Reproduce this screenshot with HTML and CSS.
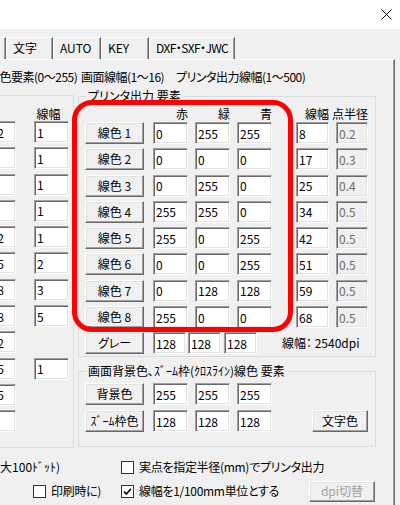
FILE: index.html
```html
<!DOCTYPE html>
<html lang="ja">
<head>
    <meta charset="UTF-8">
    <meta name="viewport" content="width=device-width, initial-scale=1.0">
    <title>色・画面・線幅</title>
    <link rel="stylesheet" href="styles.css">
</head>
<body>
    <div class="titlebar">
        <svg class="close" width="11" height="11" viewBox="0 0 11 11"><path d="M0.5 0.5L10.5 10.5M10.5 0.5L0.5 10.5" stroke="#000" stroke-width="1"/></svg>
    </div>
    <div class="tabs">
        <div class="tab tab-prev"></div>
        <div class="tab tab-moji">文字</div>
        <div class="tab tab-auto">AUTO</div>
        <div class="tab tab-key">KEY</div>
        <div class="tab tab-dxf">DXF・SXF・JWC</div>
    </div>
    <div class="panel">
        <div class="ranges">
            <span class="rng1">線色要素(0～255)</span>
            <span class="rng2">画面線幅(1～16)</span>
            <span>プリンタ出力線幅(1～500)</span>
        </div>

        <div class="content">
            <!-- 画面 要素 (左端で切れている) -->
            <div class="lgroup">
                <div class="lhead"><span class="lc-b">青</span><span class="lc-w">線幅</span></div>
                <div class="lrows">
                    <div class="lrow"><input class="ed lc-b" value="192"><input class="ed lc-w" value="1"></div>
                    <div class="lrow"><input class="ed lc-b" value="0"><input class="ed lc-w" value="1"></div>
                    <div class="lrow"><input class="ed lc-b" value="0"><input class="ed lc-w" value="1"></div>
                    <div class="lrow"><input class="ed lc-b" value="0"><input class="ed lc-w" value="1"></div>
                    <div class="lrow"><input class="ed lc-b" value="192"><input class="ed lc-w" value="1"></div>
                    <div class="lrow"><input class="ed lc-b" value="255"><input class="ed lc-w" value="2"></div>
                    <div class="lrow"><input class="ed lc-b" value="128"><input class="ed lc-w" value="3"></div>
                    <div class="lrow"><input class="ed lc-b" value="128"><input class="ed lc-w" value="5"></div>
                    <div class="lrow"><input class="ed lc-b" value="192"></div>
                    <div class="lrow"><input class="ed lc-b" value="255"><input class="ed lc-w" value="1"></div>
                    <div class="lrow"><input class="ed lc-b" value="255"></div>
                    <div class="lrow"><input class="ed lc-b" value="0"></div>
                </div>
            </div>

            <div class="col">
                <fieldset class="grp grp-print">
                    <legend>プリンタ出力 要素</legend>
                    <div class="head">
                        <span class="hc c-btn"></span>
                        <span class="hc c-r">赤</span>
                        <span class="hc c-g">緑</span>
                        <span class="hc c-b">青</span>
                        <span class="hc c-w">線幅</span>
                        <span class="hc c-d">点半径</span>
                    </div>
                    <div class="rows">
                        <div class="row"><button class="btn c-btn">線色 1</button><input class="ed c-r" value="0"><input class="ed c-g" value="255"><input class="ed c-b" value="255"><input class="ed c-w" value="8"><input class="ed c-d" value="0.2" disabled></div>
                        <div class="row"><button class="btn c-btn">線色 2</button><input class="ed c-r" value="0"><input class="ed c-g" value="0"><input class="ed c-b" value="0"><input class="ed c-w" value="17"><input class="ed c-d" value="0.3" disabled></div>
                        <div class="row"><button class="btn c-btn">線色 3</button><input class="ed c-r" value="0"><input class="ed c-g" value="255"><input class="ed c-b" value="0"><input class="ed c-w" value="25"><input class="ed c-d" value="0.4" disabled></div>
                        <div class="row"><button class="btn c-btn">線色 4</button><input class="ed c-r" value="255"><input class="ed c-g" value="255"><input class="ed c-b" value="0"><input class="ed c-w" value="34"><input class="ed c-d" value="0.5" disabled></div>
                        <div class="row"><button class="btn c-btn">線色 5</button><input class="ed c-r" value="255"><input class="ed c-g" value="0"><input class="ed c-b" value="255"><input class="ed c-w" value="42"><input class="ed c-d" value="0.5" disabled></div>
                        <div class="row"><button class="btn c-btn">線色 6</button><input class="ed c-r" value="0"><input class="ed c-g" value="0"><input class="ed c-b" value="255"><input class="ed c-w" value="51"><input class="ed c-d" value="0.5" disabled></div>
                        <div class="row"><button class="btn c-btn">線色 7</button><input class="ed c-r" value="0"><input class="ed c-g" value="128"><input class="ed c-b" value="128"><input class="ed c-w" value="59"><input class="ed c-d" value="0.5" disabled></div>
                        <div class="row"><button class="btn c-btn">線色 8</button><input class="ed c-r" value="255"><input class="ed c-g" value="0"><input class="ed c-b" value="0"><input class="ed c-w" value="68"><input class="ed c-d" value="0.5" disabled></div>
                        <div class="row"><button class="btn c-btn">グレー</button><input class="ed c-gr1" value="128"><input class="ed c-gr2" value="128"><input class="ed c-gr3" value="128"><span class="dpi">線幅：&nbsp;2540dpi</span></div>
                    </div>
                </fieldset>

                <fieldset class="grp grp-screen">
                    <legend>画面背景色､ｽﾞｰﾑ枠(ｸﾛｽﾗｲﾝ)線色 要素</legend>
                    <div class="row"><button class="btn c-btn">背景色</button><input class="ed c-r" value="255"><input class="ed c-g" value="255"><input class="ed c-b" value="255"></div>
                    <div class="row"><button class="btn c-btn">ｽﾞｰﾑ枠色</button><input class="ed c-r" value="128"><input class="ed c-g" value="128"><input class="ed c-b" value="128"><button class="btn btn-char">文字色</button></div>
                </fieldset>
            </div>
        </div>

        <div class="opt-row opt-1">
            <span class="note">(最大100ﾄﾞｯﾄ)</span>
            <label class="chk"><span class="box"></span>実点を指定半径(mm)でプリンタ出力</label>
        </div>
        <div class="opt-row opt-2">
            <label class="chk chk-print"><span class="box"></span>印刷時に)</label>
            <label class="chk"><span class="box"><svg width="11" height="11" viewBox="0 0 11 11"><path d="M2 5.5L4.3 8L9 2.8" fill="none" stroke="#000" stroke-width="1.6"/></svg></span>線幅を1/100mm単位とする</label>
            <button class="btn btn-dpi" disabled>dpi切替</button>
        </div>
    </div>

    <!-- 赤い囲み (注記) -->
    <div class="mark"></div>
</body>
</html>
```

FILE: styles.css
```css
* {
    box-sizing: border-box;
}
html {
    background: #f0f0f0;
}
body {
    margin: 0;
    width: 400px;
    height: 505px;
    overflow: hidden;
    position: relative;
    background: #f0f0f0;
    font-family: "Noto Sans CJK JP", sans-serif;
    font-size: 12px;
    line-height: 14px;
    font-feature-settings: "palt";
    color: #000;
}
.titlebar {
    height: 29px;
    background: #fff;
    display: flex;
    justify-content: flex-end;
    align-items: center;
    padding-right: 8px;
}
.tabs {
    display: flex;
    margin-top: 8px;
    height: 22px;
    white-space: nowrap;
}
.tab {
    height: 22px;
    border-top: 1px solid #fff;
    border-left: 1px solid #fff;
    border-right: 1px solid #696969;
    box-shadow: inset -1px 0 #a0a0a0;
    padding-left: 6px;
    line-height: 20px;
    flex: none;
}
.tab-prev { margin-left: -40px; width: 46px; }
.tab-moji { width: 47px; }
.tab-auto { width: 48px; }
.tab-key { width: 48px; }
.tab-dxf { width: 86px; letter-spacing: -0.6px; }

.panel {
    width: 395px;
    height: 446px;
    border-top: 1px solid #fff;
    border-right: 1px solid #696969;
    box-shadow: inset -1px 0 #a0a0a0;
}
.ranges {
    display: flex;
    margin-top: 10px;
    margin-left: -12px;
    white-space: nowrap;
    letter-spacing: -0.5px;
}
.rng1 { width: 93px; flex: none; }
.rng2 { width: 95px; flex: none; }

.content {
    display: flex;
    align-items: flex-start;
    margin-top: 5px;
}

/* edit box */
.ed {
    height: 22px;
    margin: 0;
    padding: 0 0 0 2px;
    font: inherit;
    color: #000;
    background: #fff;
    border: 1px solid;
    border-color: #a0a0a0 #fff #fff #a0a0a0;
    box-shadow: inset 1px 1px #696969, inset -1px -1px #e3e3e3;
    outline: none;
    flex: none;
}
.ed:disabled {
    background: #f0f0f0;
    color: #6d6d6d;
}

/* push button */
.btn {
    height: 22px;
    margin: 0;
    padding: 0;
    font: inherit;
    color: #000;
    background: #f0f0f0;
    border: 1px solid;
    border-color: #fff #696969 #696969 #fff;
    box-shadow: inset -1px -1px #a0a0a0, inset 1px 1px #e3e3e3;
    display: flex;
    align-items: center;
    justify-content: center;
    white-space: nowrap;
    flex: none;
}
.btn:disabled {
    color: #a0a0a0;
}

/* left group (cut at the window edge) */
.lgroup {
    margin-left: -40px;
    margin-top: 6px;
    width: 114px;
    height: 353px;
    border: 1px solid #dcdcdc;
    padding: 11px 4px 0 20px;
    flex: none;
}
.lhead, .lrow {
    display: flex;
}
.lhead {
    height: 14px;
}
.lhead span {
    text-align: center;
}
.lc-b { width: 35px; }
.lhead .lc-b { padding-right: 12px; }
.lc-w { width: 35px; margin-left: 18px; }
.lhead .lc-w { padding-right: 6px; }
.lrows {
    display: flex;
    flex-direction: column;
    gap: 4.3px;
}
.lrow {
    height: 22px;
}

/* right column groups */
.col {
    margin-left: 4px;
    width: 298px;
    flex: none;
}
.grp {
    margin: 0;
    min-width: 0;
    border: 1px solid #dcdcdc;
    padding: 0 5px 2px 6px;
}
.grp legend {
    margin-left: 1px;
    padding: 0 2px;
    line-height: 14px;
    white-space: nowrap;
}
.head {
    display: flex;
    height: 14px;
    margin-top: 4px;
    margin-bottom: 1px;
}
.hc {
    display: flex;
    justify-content: flex-end;
    white-space: nowrap;
    flex: none;
}
.rows {
    display: flex;
    flex-direction: column;
    gap: 4.3px;
}
.row {
    display: flex;
    align-items: center;
    height: 22px;
}
.c-btn { width: 59px; }
.c-r { width: 35px; margin-left: 9px; }
.c-g, .c-b { width: 35px; margin-left: 7px; }
.c-w { width: 33px; margin-left: 24px; }
.c-d { width: 32px; margin-left: 7px; }
.c-gr1 { width: 33px; margin-left: 9px; }
.c-gr2 { width: 33px; margin-left: 2px; }
.c-gr3 { width: 33px; margin-left: 3px; }
.dpi {
    margin-left: 25px;
    white-space: nowrap;
}

.grp-screen {
    margin-top: 7px;
    padding-bottom: 14px;
}
.grp-screen .row {
    margin-top: 5px;
}
.btn-char {
    width: 56px;
    margin-left: 40px;
}

/* options below */
.opt-row {
    display: flex;
    align-items: center;
    height: 22px;
    white-space: nowrap;
}
.opt-1 { margin-top: 8px; }
.opt-2 { margin-top: 2px; }
.note {
    margin-left: -16px;
    width: 137px;
    flex: none;
}
.chk {
    display: flex;
    align-items: center;
    flex: none;
    letter-spacing: -0.3px;
}
.chk-print {
    margin-left: 33px;
    width: 88px;
}
.box {
    width: 13px;
    height: 13px;
    border: 1px solid #333;
    background: #fff;
    margin-right: 5px;
    display: flex;
    align-items: center;
    justify-content: center;
    flex: none;
}
.btn-dpi {
    width: 66px;
    height: 21px;
    margin-left: auto;
    margin-right: 19px;
}

/* annotation */
.mark {
    position: absolute;
    left: 72px;
    top: 100px;
    width: 221px;
    height: 232px;
    border: 5px solid #f00;
    border-radius: 20px;
}
```
